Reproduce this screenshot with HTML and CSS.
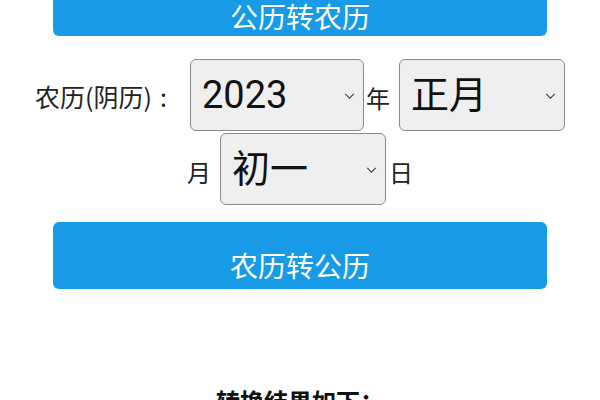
FILE: index.html
```html
<!DOCTYPE html>
<html lang="zh-CN">
<head>
<meta charset="utf-8">
<title>农历公历转换</title>
<link rel="stylesheet" href="styles.css">
</head>
<body>
<div class="page">
  <button class="btn btn-top" type="button">公历转农历</button>
  <div class="form">
    <div class="row">
      <span class="label">农历(阴历)<span class="colon">:</span></span>
      <div class="sel sel-year">
        <select><option>2023</option></select>
        <svg class="chev" viewBox="0 0 12 7" width="11" height="6"><path d="M1 1 L6 6 L11 1" fill="none" stroke="#444" stroke-width="1.3"/></svg>
      </div>
      <span class="unit unit-year">年</span>
      <div class="sel sel-month">
        <select><option>正月</option></select>
        <svg class="chev" viewBox="0 0 12 7" width="11" height="6"><path d="M1 1 L6 6 L11 1" fill="none" stroke="#444" stroke-width="1.3"/></svg>
      </div>
    </div>
    <div class="row row-2">
      <span class="unit unit-month">月</span>
      <div class="sel sel-day">
        <select><option>初一</option></select>
        <svg class="chev" viewBox="0 0 12 7" width="11" height="6"><path d="M1 1 L6 6 L11 1" fill="none" stroke="#444" stroke-width="1.3"/></svg>
      </div>
      <span class="unit unit-day">日</span>
    </div>
  </div>
  <button class="btn btn-bottom" type="button">农历转公历</button>
  <h3 class="result">转换结果如下：</h3>
</div>
</body>
</html>
```

FILE: styles.css
```css
html, body {
  margin: 0;
  padding: 0;
  background: #ffffff;
  overflow: hidden;
}

body {
  font-family: Roboto, "Noto Sans CJK SC", sans-serif;
  color: #222222;
}

.page {
  width: 600px;
}

.btn {
  display: block;
  width: 494px;
  height: 67px;
  margin: 0 auto;
  border: none;
  border-radius: 6px;
  background: #179be6;
  color: #ffffff;
  font-family: "Noto Sans CJK SC", sans-serif;
  font-size: 28px;
  line-height: 30px;
  text-align: center;
  box-sizing: border-box;
}

.btn-top {
  margin-top: -31px;
  padding: 32px 0 5px;
}

.btn-bottom {
  margin-top: 17px;
  padding: 28px 0 9px;
}

.form {
  margin-top: 23px;
}

.row {
  display: flex;
  justify-content: center;
  align-items: center;
  height: 72px;
}

.row-2 {
  margin-top: 2px;
}

.label {
  font-family: "Noto Sans CJK SC", sans-serif;
  font-size: 25px;
  margin-right: 23px;
  padding-top: 2px;
}

.colon {
  margin-left: 8px;
}

.unit {
  font-family: "Noto Sans CJK SC", sans-serif;
  font-size: 24px;
  padding-top: 4px;
}

.unit-year {
  margin: 0 9px 0 2px;
}

.unit-month {
  margin-right: 9px;
}

.unit-day {
  margin-left: 3px;
}

.sel {
  position: relative;
  height: 72px;
}

.sel-year {
  width: 174px;
}

.sel-month,
.sel-day {
  width: 166px;
}

.sel select {
  appearance: none;
  -webkit-appearance: none;
  width: 100%;
  height: 100%;
  box-sizing: border-box;
  margin: 0;
  padding: 0 0 0 11px;
  border: 1.5px solid #8a8a8a;
  border-radius: 6px;
  background: #efefef;
  color: #111111;
  font-family: Roboto, "Noto Sans CJK SC", sans-serif;
  font-size: 38px;
}

.chev {
  position: absolute;
  right: 9px;
  top: 34px;
  pointer-events: none;
}

.result {
  margin: 94px 0 0;
  font-family: "Noto Sans CJK SC", sans-serif;
  font-size: 24px;
  font-weight: bold;
  line-height: 36px;
  text-align: center;
  color: #111111;
}
```
